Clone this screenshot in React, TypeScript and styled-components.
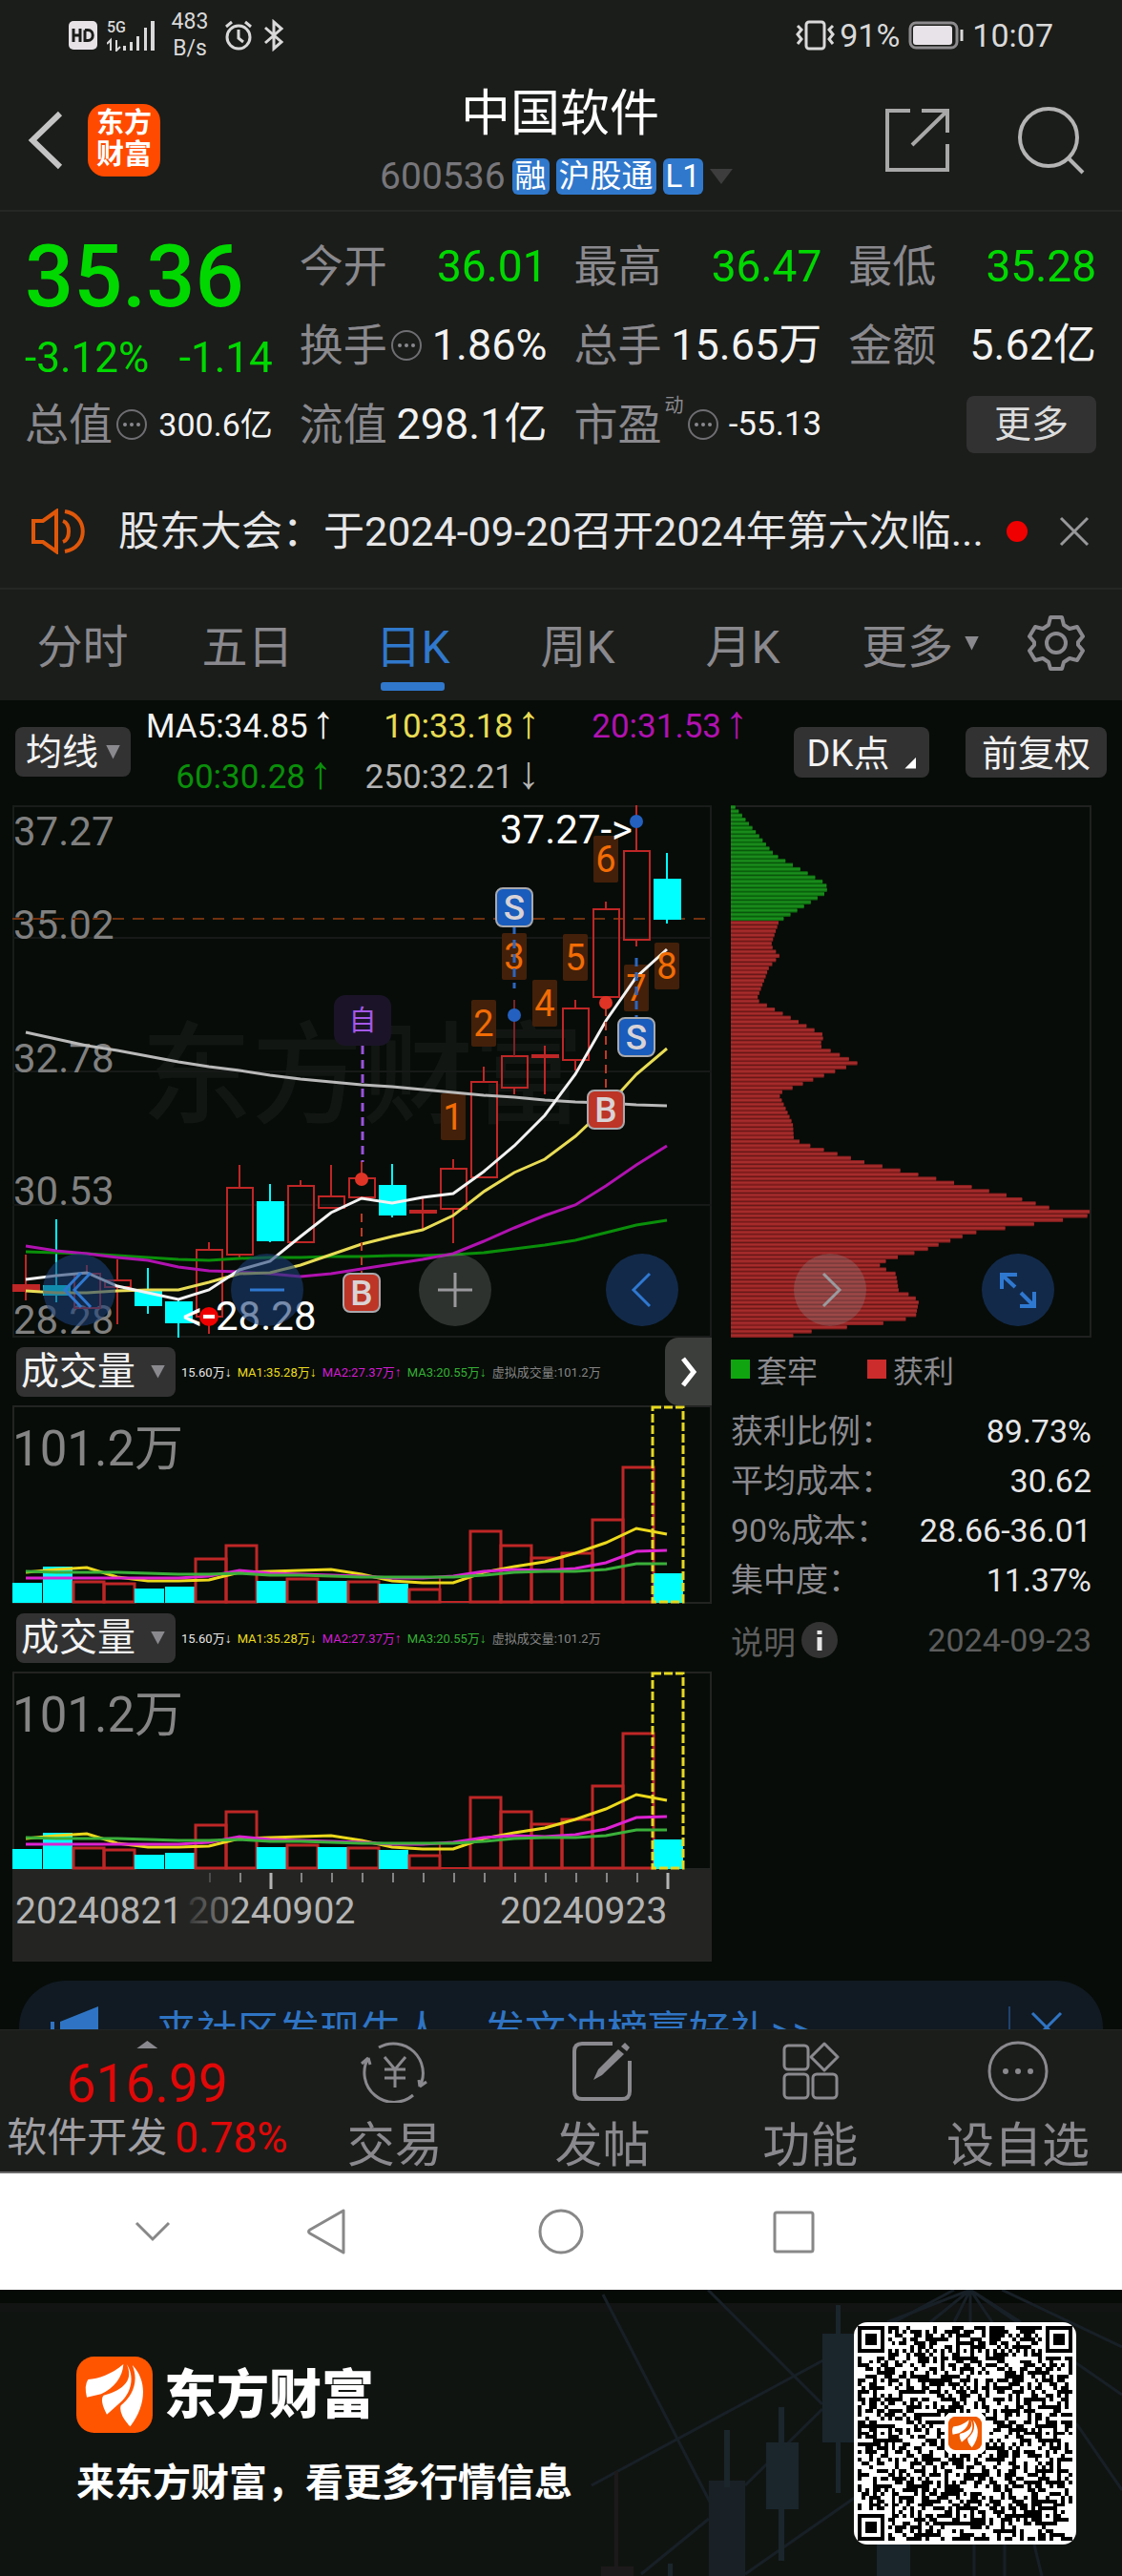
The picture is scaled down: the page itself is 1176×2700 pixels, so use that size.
import React from "react";
import styled, { createGlobalStyle } from "styled-components";

const FONT = `Roboto, "Noto Sans CJK SC", sans-serif`;
const C = {
  panel: "#1b1d1a",
  ink: "#070c08",
  label: "#8a898e",
  text: "#e6e6e8",
  green: "#00d800",
  blue: "#3078cc",
  box: "#323232",
  frame: "#222422",
  red: "#bf2626",
  cyan: "#00ffff",
};

const GlobalStyle = createGlobalStyle`
  * { box-sizing: border-box; }
  body { margin: 0; background: ${C.ink}; font-family: ${FONT}; color: ${C.text}; }
  button, select { font: inherit; color: inherit; background: none; border: 0; padding: 0; margin: 0; appearance: none; cursor: pointer; }
  svg { display: block; flex: none; }
  a { color: inherit; text-decoration: none; }
`;

const Row = styled.div<{ gap?: number }>`
  display: flex;
  align-items: center;
  gap: ${(p) => p.gap ?? 0}px;
`;
const Panel = styled.div`
  background: ${C.panel};
`;
const StatusBar = styled.div`
  display: flex;
  justify-content: space-between;
  height: 74px;
  padding: 0 72px;
  font-size: 34px;
  color: #d9d9d9;
`;
const NetSpeed = styled.div`
  width: 40px;
  font-size: 23px;
  line-height: 28px;
  text-align: center;
  margin: 0 6px;
`;
const Header = styled.header`
  display: grid;
  grid-template-columns: 1fr auto 1fr;
  align-items: center;
  height: 148px;
  padding: 0 38px 0 28px;
  border-bottom: 2px solid #252724;
`;
const HeaderEnd = styled(Row)`
  justify-content: flex-end;
`;
const AppBadge = styled.a`
  width: 76px;
  height: 76px;
  border-radius: 18px;
  background: #ff4a00;
  color: #fff;
  font-size: 29px;
  font-weight: 700;
  line-height: 33px;
  padding: 4px 9px;
`;
const Title = styled.h1`
  margin: 0;
  padding-left: 8px;
  font-size: 52px;
  line-height: 60px;
  font-weight: 400;
  text-align: center;
  color: #fff;
`;
const CodeLine = styled.div`
  display: flex;
  align-items: center;
  gap: 7px;
  margin-top: 16px;
  font-size: 39px;
  line-height: 38px;
  color: #77767b;
`;
const Tag = styled.span`
  padding: 0 3px;
  border-radius: 6px;
  background: ${C.blue};
  color: #fff;
  font-size: 33px;
  line-height: 38px;
`;
const Caret = styled.i<{ w: number; h: number; color?: string; up?: boolean }>`
  flex: none;
  width: ${(p) => p.w}px;
  height: ${(p) => p.h}px;
  background: ${(p) => p.color ?? C.label};
  clip-path: ${(p) => (p.up ? "polygon(50% 0, 100% 100%, 0 100%)" : "polygon(0 0, 100% 0, 50% 100%)")};
`;

const Quote = styled.section`
  display: grid;
  grid-template-columns: repeat(4, 1fr);
  grid-auto-rows: 83px;
  column-gap: 28px;
  padding: 15px 27px 8px 26px;
`;
const PriceBlock = styled.div`
  grid-row: span 2;
  color: ${C.green};
`;
const Price = styled.div`
  font-size: 90px;
  line-height: 108px;
  font-weight: 500;
`;
const Change = styled.div`
  display: flex;
  justify-content: space-between;
  font-size: 44px;
  line-height: 60px;
  white-space: nowrap;
`;
const Cell = styled.div`
  display: flex;
  align-items: center;
  justify-content: space-between;
  white-space: nowrap;
  line-height: 60px;
`;
const CellLabel = styled.span`
  display: flex;
  align-items: center;
  gap: 3px;
  font-size: 46px;
  color: ${C.label};
`;
const Sup = styled.span`
  align-self: flex-start;
  font-size: 20px;
  line-height: 20px;
`;
const Value = styled.span<{ size: number; green?: boolean }>`
  font-size: ${(p) => p.size}px;
  color: ${(p) => (p.green ? C.green : "#f2f2f2")};
`;
const MoreButton = styled.button`
  width: 136px;
  height: 60px;
  margin-left: auto;
  padding-bottom: 4px;
  border-radius: 8px;
  background: ${C.box};
  color: #dcdcdc;
  font-size: 39px;
`;

const News = styled.section`
  display: flex;
  align-items: center;
  height: 124px;
  padding: 3px 34px 0 32px;
  border-bottom: 2px solid #252724;
`;
const NewsText = styled.a`
  flex: 1;
  margin-left: 34px;
  font-size: 43px;
  line-height: 60px;
  white-space: nowrap;
  overflow: hidden;
`;
const RedDot = styled.i`
  width: 22px;
  height: 22px;
  margin: 0 33px 0 19px;
  border-radius: 50%;
  background: #f00000;
`;
const Tabs = styled.nav`
  display: grid;
  grid-template-columns: repeat(6, 173fr) 138fr;
  height: 116px;
`;
const Tab = styled.button<{ active?: boolean; menu?: boolean }>`
  display: flex;
  align-items: center;
  justify-content: center;
  gap: 12px;
  position: relative;
  padding: 0 0 4px ${(p) => (p.menu ? 26 : 0)}px;
  font-size: 48px;
  color: ${(p) => (p.active ? C.blue : C.label)};
  &::after {
    content: "";
    display: ${(p) => (p.active ? "block" : "none")};
    position: absolute;
    bottom: 10px;
    width: 67px;
    height: 9px;
    border-radius: 3px;
    background: ${C.blue};
  }
`;

const Averages = styled.section`
  display: flex;
  align-items: center;
  gap: 16px;
  height: 110px;
  padding: 0 16px 2px;
`;
const Picker = styled.label<{ wide?: boolean }>`
  display: flex;
  align-items: center;
  gap: ${(p) => (p.wide ? 16 : 7)}px;
  height: 52px;
  padding: 0 11px 0 ${(p) => (p.wide ? 5 : 11)}px;
  border-radius: 8px;
  background: ${C.box};
  color: #f2f2f2;
  font-size: ${(p) => (p.wide ? 40 : 38)}px;
`;
const AverageGrid = styled.div`
  display: grid;
  grid-template-columns: 195px 218px 218px;
  font-size: 35px;
  line-height: 53px;
  white-space: nowrap;
  text-align: right;
`;
const Tint = styled.span<{ color: string }>`
  color: ${(p) => p.color};
`;
const ArrowMark = styled.span`
  margin-left: 4px;
  font-family: "Liberation Sans", sans-serif;
  font-size: 48px;
  line-height: 36px;
`;
const ChartButton = styled.button<{ end?: boolean }>`
  display: flex;
  align-items: center;
  justify-content: center;
  gap: 16px;
  width: ${(p) => (p.end ? 148 : 142)}px;
  height: 53px;
  margin-left: ${(p) => (p.end ? 22 : 0)}px;
  padding-bottom: 4px;
  border-radius: 8px;
  background: ${C.box};
  color: #f2f2f2;
  font-size: 38px;
  white-space: nowrap;
`;
const Spacer = styled.div`
  flex: 1;
`;
const Corner = styled.i`
  align-self: flex-end;
  width: 12px;
  height: 12px;
  margin-bottom: 5px;
  background: #fff;
  clip-path: polygon(100% 0, 100% 100%, 0 100%);
`;

const ChartArea = styled.section`
  position: relative;
  display: grid;
  grid-template-columns: 733fr 378fr;
  gap: 20px;
  padding: 0 32px 20px 13px;
`;
const Plot = styled.svg`
  width: 100%;
  height: auto;
  font-family: ${FONT};
`;
const RoundButtons = styled.div`
  position: absolute;
  top: 470px;
  left: 45px;
  right: 71px;
  display: flex;
  justify-content: space-between;
`;
const RoundButton = styled.button<{ tone: "blue" | "grey" }>`
  display: grid;
  place-items: center;
  width: 76px;
  height: 76px;
  border-radius: 50%;
  background: ${(p) => (p.tone === "blue" ? "rgba(26, 62, 116, 0.6)" : "rgba(140, 140, 140, 0.3)")};
  color: ${(p) => (p.tone === "blue" ? "#2f78d0" : "#9a9a9e")};
`;
const VolumeBar = styled.div`
  display: flex;
  align-items: center;
  gap: 6px;
  height: 71px;
  padding-left: 4px;
  font-size: 13px;
  white-space: nowrap;
  ${ArrowMark} {
    margin-left: 0;
    font-size: 14px;
    line-height: 14px;
  }
`;
const NextButton = styled.button`
  display: grid;
  place-items: center;
  align-self: stretch;
  width: 49px;
  margin-left: auto;
  border-radius: 14px 0 0 14px;
  background: #3c3e3c;
  color: #fff;
`;
const Legend = styled.div`
  display: flex;
  align-items: center;
  gap: 52px;
  height: 72px;
  padding-bottom: 6px;
  font-size: 32px;
  color: ${C.label};
`;
const LegendItem = styled.span<{ color: string }>`
  display: flex;
  align-items: center;
  gap: 7px;
  &::before {
    content: "";
    width: 20px;
    height: 20px;
    background: ${(p) => p.color};
  }
`;
const Facts = styled.dl`
  margin: 0;
  font-size: 34px;
  line-height: 52px;
`;
const Fact = styled.div`
  display: flex;
  justify-content: space-between;
  dt { color: ${C.label}; }
  dd { margin: 0; }
`;
const Note = styled.div`
  display: flex;
  align-items: center;
  justify-content: space-between;
  height: 74px;
  font-size: 34px;
  color: #5d5d5d;
`;
const InfoButton = styled.button`
  display: flex;
  align-items: center;
  gap: 6px;
`;

const BannerClip = styled.aside`
  height: 51px;
  padding: 0 20px;
  overflow: hidden;
`;
const Banner = styled.div`
  display: flex;
  align-items: center;
  height: 98px;
  padding: 0 42px 0 33px;
  border-radius: 49px;
  background: #111a22;
  color: #2f74c4;
  font-size: 43px;
`;
const BannerText = styled.a`
  flex: 1;
  margin-left: 59px;
  white-space: nowrap;
`;
const Divider = styled.i`
  width: 2px;
  height: 44px;
  margin-right: 21px;
  background: #1d4270;
`;

const BottomBar = styled.nav`
  display: grid;
  grid-template-columns: 305fr repeat(4, 218fr);
  height: 151px;
  background: ${C.panel};
  border-top: 1px solid #232522;
  border-bottom: 2px solid #6a6a6a;
  color: ${C.label};
`;
const Sector = styled.button`
  display: flex;
  flex-direction: column;
  align-items: center;
  padding: 11px 0 0 4px;
`;
const SectorValue = styled.span`
  font-size: 55px;
  line-height: 74px;
  color: #e00808;
`;
const SectorName = styled.span`
  display: flex;
  gap: 8px;
  font-size: 42px;
  line-height: 40px;
  white-space: nowrap;
  color: #a09fa4;
`;
const SectorChange = styled.span`
  font-size: 44px;
  color: #e00808;
`;
const Action = styled.button`
  display: flex;
  flex-direction: column;
  align-items: center;
  padding-top: 10px;
  gap: 15px;
  font-size: 50px;
  line-height: 60px;
  white-space: nowrap;
`;
const SystemNav = styled.nav`
  display: flex;
  align-items: center;
  height: 122px;
  padding-left: 141px;
  background: #fff;
  color: #888;
`;
const SystemButton = styled.button<{ before: number }>`
  margin-left: ${(p) => p.before}px;
`;

const Footer = styled.footer`
  position: relative;
  display: flex;
  align-items: center;
  justify-content: space-between;
  height: 300px;
  padding: 0 48px 0 80px;
  background: #101411;
  color: #fff;
`;
const FooterArt = styled.svg`
  position: absolute;
  inset: 0;
  width: 100%;
  height: 100%;
`;
const Brand = styled.div`
  position: relative;
  padding-top: 2px;
`;
const BrandName = styled.span`
  font-size: 55px;
  line-height: 80px;
  font-weight: 900;
`;
const Slogan = styled.p`
  margin: 23px 0 0;
  font-size: 40px;
  line-height: 60px;
  font-weight: 700;
`;
const QrCard = styled.div`
  position: relative;
  padding: 4px;
  border-radius: 14px;
  background: #fff;
`;

/* ---------- icons ---------- */

type IconProps = { w: number; h: number; sw?: number; children: React.ReactNode };
const Icon = ({ w, h, sw = 3, children }: IconProps) => (
  <svg width={w} height={h} viewBox={`0 0 ${w} ${h}`} fill="none" stroke="currentColor" strokeWidth={sw} aria-hidden="true">
    {children}
  </svg>
);

const Dots = () => (
  <Icon w={34} h={34} sw={2}>
    <circle cx="17" cy="17" r="15" stroke="#6f6e72" />
    <g fill="#8a898e" stroke="none">
      <circle cx="10" cy="17" r="2" />
      <circle cx="17" cy="17" r="2" />
      <circle cx="24" cy="17" r="2" />
    </g>
  </Icon>
);

const Flame = ({ size, color = "#ff5500" }: { size: number; color?: string }) => (
  <svg width={size} height={size} viewBox="60 60 240 240" aria-hidden="true">
    <rect x="60" y="60" width="240" height="240" rx="56" fill={color} />
    <g fill="#fff">
      <path d="M208 84C170 116 130 130 97 132Q84 150 93 188L138 178C178 160 206 124 208 84Z" />
      <path d="M218 84C240 130 214 164 146 182Q132 196 156 242L192 210C236 176 244 120 218 84Z" />
      <path d="M236 86C258 140 236 184 200 214Q192 240 229 280C276 220 288 140 236 86Z" />
    </g>
  </svg>
);

/* ---------- price chart ---------- */

const cx = (i: number) => 27 + 32 * i;
const line = (ys: number[]) => ys.map((y, i) => `${cx(i)},${y}`).join(" ");

// kind, body top, body bottom, high, low
type Candle = [string, number, number, number, number];
const candles: Candle[] = [
  ["f", 1347, 1353, 1315, 1363],
  ["c", 1348, 1357, 1278, 1365],
  ["r", 1335, 1371, 1326, 1371],
  ["r", 1342, 1349, 1320, 1388],
  ["c", 1353, 1368, 1329, 1377],
  ["c", 1365, 1386, 1363, 1403],
  ["r", 1310, 1380, 1302, 1398],
  ["r", 1245, 1315, 1221, 1318],
  ["c", 1260, 1300, 1241, 1302],
  ["r", 1243, 1302, 1237, 1302],
  ["r", 1254, 1266, 1221, 1266],
  ["r", 1235, 1255, 1217, 1255],
  ["c", 1243, 1273, 1220, 1276],
  ["r", 1269, 1271, 1255, 1288],
  ["r", 1225, 1267, 1215, 1303],
  ["r", 1134, 1234, 1118, 1234],
  ["r", 1107, 1140, 1096, 1147],
  ["r", 1106, 1108, 1096, 1147],
  ["r", 1057, 1111, 1048, 1122],
  ["r", 953, 1045, 945, 1056],
  ["r", 892, 985, 844, 992],
  ["c", 922, 963, 894, 968],
];
const ma5 = [1341, 1337, 1334, 1348, 1355, 1362, 1352, 1331, 1322, 1296, 1271, 1256, 1261, 1255, 1251, 1228, 1201, 1169, 1126, 1070, 1024, 995];
const ma10 = [1353, 1355, 1355, 1353, 1352, 1352, 1344, 1335, 1334, 1326, 1315, 1304, 1296, 1289, 1274, 1249, 1229, 1215, 1191, 1161, 1126, 1099];
const ma20 = [1306, 1311, 1314, 1318, 1321, 1328, 1332, 1333, 1335, 1338, 1335, 1330, 1325, 1320, 1314, 1301, 1287, 1274, 1263, 1243, 1221, 1201];
const ma60 = [1312, 1313, 1314, 1316, 1318, 1320, 1321, 1319, 1318, 1318, 1317, 1317, 1316, 1316, 1315, 1313, 1309, 1305, 1300, 1292, 1284, 1279];
const ma250 = [1082, 1089, 1096, 1101, 1107, 1113, 1118, 1122, 1127, 1131, 1134, 1137, 1139, 1142, 1145, 1148, 1150, 1153, 1155, 1156, 1158, 1159];
const countTags: [string, number, number][] = [
  ["1", 14, 1146], ["2", 15, 1048], ["3", 16, 978], ["4", 17, 1027],
  ["5", 18, 979], ["6", 19, 876], ["7", 20, 1011], ["8", 21, 988],
];

const Signal = ({ x, y, kind }: { x: number; y: number; kind: "B" | "S" }) => (
  <g>
    <rect x={x - 19} y={y - 20} width="38" height="40" rx="7" fill={kind === "S" ? "#195cbc" : "#bd3526"} stroke="#a9a9ad" strokeWidth="2" />
    <text x={x} y={y + 13} fontSize="37" fontWeight="500" fill="#d9d3d6" textAnchor="middle">{kind}</text>
  </g>
);

const PriceChart = () => (
  <Plot viewBox="13 844 733 558" role="img" aria-label="日K线图">
    <rect x="14" y="845" width="731" height="556" fill="none" stroke="#191c1a" strokeWidth="2" />
    <text x="148" y="1168" fontSize="116" fontWeight="500" fill="#121613">东方财富</text>
    <g stroke="#161917" strokeWidth="2">
      <path d="M13 983H746M13 1123H746M13 1263H746" />
    </g>
    <g fontSize="42" fill="#808080">
      <text x="14" y="886">37.27</text>
      <text x="14" y="984">35.02</text>
      <text x="14" y="1124">32.78</text>
      <text x="14" y="1263">30.53</text>
      <text x="14" y="1398">28.28</text>
    </g>
    <path d="M13 963H746" stroke="#71310f" strokeWidth="2" strokeDasharray="12 9" />
    {countTags.map(([n, i, y]) => (
      <rect key={n} x={cx(i) - 13} y={y} width="26" height="49" rx="2" fill="#43200a" />
    ))}
    {candles.map(([kind, top, bottom, high, low], i) => {
      const color = kind === "c" ? C.cyan : C.red;
      const solid = kind !== "r";
      return (
        <g key={i} stroke={color} strokeWidth="2" fill={solid ? color : "none"}>
          <path d={`M${cx(i)} ${high}V${top}M${cx(i)} ${bottom}V${low}`} />
          <rect x={cx(i) - 13} y={top} width="27" height={bottom - top} />
        </g>
      );
    })}
    <path d="M539 1048V1107" stroke="#7a2226" strokeWidth="2" />
    <g fill="none" strokeWidth="3">
      <polyline points={line(ma250)} stroke="#b9b9b9" />
      <polyline points={line(ma60)} stroke="#0a8f0a" />
      <polyline points={line(ma20)} stroke="#b012b0" />
      <polyline points={line(ma10)} stroke="#e8dc55" />
      <polyline points={line(ma5)} stroke="#f2f2f2" />
    </g>
    <g fontSize="38" fill="#f26c05" textAnchor="middle">
      {countTags.map(([n, i, y]) => (
        <text key={n} x={cx(i)} y={y + 38}>{n}</text>
      ))}
    </g>
    <g strokeWidth="3" strokeDasharray="9 6">
      <path d="M380 1096V1218" stroke="#9a52dc" />
      <path d="M539 970V1036M667 1004V1066" stroke="#2c66c0" />
      <path d="M635 1056V1144M379 1272V1336" stroke="#c03a24" strokeWidth="2" />
    </g>
    <rect x="350" y="1043" width="60" height="53" rx="12" fill="#1b1428" />
    <text x="380" y="1080" fontSize="29" fill="#a458e8" textAnchor="middle">自</text>
    <circle cx="539" cy="1064" r="7" fill="#2460c0" />
    <circle cx="667" cy="861" r="7" fill="#2460c0" />
    <circle cx="635" cy="1051" r="7" fill="#e03426" />
    <circle cx="379" cy="1236" r="7" fill="#e03426" />
    <Signal x={539} y={951} kind="S" />
    <Signal x={667} y={1087} kind="S" />
    <Signal x={635} y={1163} kind="B" />
    <Signal x={379} y={1355} kind="B" />
    <g fontSize="42" fill="#fff">
      <text x="524" y="884">37.27-&gt;</text>
      <text x="191" y="1394">&lt;</text>
      <text x="226" y="1394">28.28</text>
    </g>
    <circle cx="219" cy="1380" r="10" fill="#f00000" />
    <path d="M213 1380H225" stroke="#fff" strokeWidth="4" />
  </Plot>
);

/* ---------- chip distribution ---------- */

const profile: [number, number][] = [
  [844, 3], [896, 46], [926, 100], [935, 101], [963, 55], [964, 51], [991, 42], [1002, 51], [1014, 40], [1048, 27],
  [1085, 98], [1096, 93], [1114, 133], [1130, 90], [1146, 50], [1178, 65], [1194, 66], [1200, 81], [1218, 140],
  [1241, 240], [1255, 299], [1266, 335], [1270, 377], [1275, 373], [1284, 310], [1292, 254], [1304, 219], [1311, 201],
  [1320, 165], [1327, 155], [1335, 173], [1353, 176], [1358, 191], [1364, 197], [1379, 194], [1385, 175], [1389, 139],
  [1396, 79], [1403, 53],
];
const widthAt = (y: number) => {
  const k = profile.findIndex((p) => p[0] >= y);
  if (k <= 0) return profile[k === 0 ? 0 : profile.length - 1][1];
  const [y0, w0] = profile[k - 1];
  const [y1, w1] = profile[k];
  return w0 + ((w1 - w0) * (y - y0)) / (y1 - y0);
};
const PITCH = 558 / 129;

const ChipChart = () => (
  <Plot viewBox="766 844 378 558" role="img" aria-label="筹码分布">
    <rect x="767" y="845" width="376" height="556" fill="none" stroke="#1f211f" strokeWidth="2" />
    {Array.from({ length: 129 }, (_, i) => {
      const y = 844 + i * PITCH;
      const w = widthAt(y + 2);
      const under = y < 962;
      return (
        <g key={i}>
          <rect x="766" y={y} width={w} height={PITCH} fill={under ? "#0e7010" : "#861f1f"} />
          <rect x="766" y={y + 1} width={w} height="2" fill={under ? "#1a8c1c" : "#a72c2c"} />
        </g>
      );
    })}
  </Plot>
);

/* ---------- volume ---------- */

const volumes: [string, number][] = [
  ["c", 186], ["c", 169], ["r", 185], ["r", 187], ["c", 192], ["c", 190], ["r", 161], ["r", 147], ["c", 184], ["r", 182], ["c", 184],
  ["r", 185], ["c", 187], ["r", 193], ["n", 181], ["r", 132], ["r", 147], ["r", 160], ["r", 155], ["r", 120], ["r", 65], ["c", 176],
];
const vol5 = [175, 172, 170, 180, 184, 184, 183, 175, 174, 173, 172, 177, 184, 186, 186, 175, 169, 164, 155, 144, 129, 135];
const vol10 = [181, 181, 181, 181, 181, 181, 179, 173, 176, 177, 178, 179, 181, 181, 179, 174, 172, 173, 171, 165, 153, 152];
const vol20 = [174, 175, 175, 175, 176, 177, 177, 176, 178, 178, 179, 180, 180, 180, 180, 178, 175, 174, 174, 172, 166, 166];

const VolumeChart = () => (
  <Plot viewBox="13 0 733 208" role="img" aria-label="成交量图">
    <rect x="14" y="1" width="731" height="206" fill="none" stroke={C.frame} strokeWidth="2" />
    <text x="13" y="63" fontSize="51" fill="#858585">101.2万</text>
    {volumes.map(([kind, y], i) => {
      const x = 13 + 32 * i;
      if (kind === "c") return <rect key={i} x={x} y={y} width="31" height={207 - y} fill={C.cyan} />;
      if (kind === "n") return <path key={i} d={`M${x} ${y}V206H${x + 32}`} stroke={C.red} strokeWidth="2" fill="none" />;
      return <rect key={i} x={x} y={y} width="32" height={206 - y} stroke={C.red} strokeWidth="3" fill="none" />;
    })}
    <rect x="684" y="2" width="32" height="204" fill="none" stroke="#e6d820" strokeWidth="3" strokeDasharray="9 3" />
    <g fill="none" strokeWidth="3">
      <polyline points={line(vol5)} stroke="#ecd91c" />
      <polyline points={line(vol10)} stroke="#dc22d2" />
      <polyline points={line(vol20)} stroke="#3ab03a" />
    </g>
  </Plot>
);

const DateAxis = () => (
  <Plot viewBox="13 0 733 96" role="img" aria-label="日期轴">
    <defs>
      <linearGradient id="fade" gradientUnits="userSpaceOnUse" x1="199" x2="250" y1="0" y2="0">
        <stop offset="0" stopColor="#3a3b3a" />
        <stop offset="0.6" stopColor="#707070" />
        <stop offset="1" stopColor="#b4b4b4" />
      </linearGradient>
    </defs>
    <rect x="13" width="733" height="96" fill="#242523" />
    {Array.from({ length: 16 }, (_, k) => {
      const i = k + 6;
      const major = i === 8 || i === 21;
      return <path key={i} d={`M${cx(i) + 1} 3V${major ? 20 : 13}`} stroke={k === 0 ? "#4a4b4a" : major ? "#b4b4b4" : "#858585"} strokeWidth={major ? 3 : 2} />;
    })}
    <g fontSize="39" fill="#b4b4b4">
      <text x="16" y="56">20240821</text>
      <text x="197" y="56" fill="url(#fade)">20240902</text>
      <text x="524" y="56">20240923</text>
    </g>
  </Plot>
);

const VolumePanel = ({ id, next }: { id: string; next?: boolean }) => (
  <div>
    <VolumeBar>
      <Picker wide htmlFor={id}>
        <select id={id} aria-label="副图指标" defaultValue="成交量">
          <option>成交量</option>
        </select>
        <Caret w={15} h={14} />
      </Picker>
      <Tint color="#e6e6e6">15.60万<ArrowMark>↓</ArrowMark></Tint>
      <Tint color="#ecdc1c">MA1:35.28万<ArrowMark>↓</ArrowMark></Tint>
      <Tint color="#d31bd3">MA2:27.37万<ArrowMark>↑</ArrowMark></Tint>
      <Tint color="#35b035">MA3:20.55万<ArrowMark>↓</ArrowMark></Tint>
      <Tint color="#858585">虚拟成交量:101.2万</Tint>
      {next && (
        <NextButton aria-label="下一个">
          <Icon w={20} h={32} sw={5}><path d="M4 2L15 16L4 30" /></Icon>
        </NextButton>
      )}
    </VolumeBar>
    <VolumeChart />
  </div>
);

/* ---------- QR code ---------- */

const N = 57;
const qrPath = (() => {
  let seed = 20240923;
  const rand = () => {
    seed = (seed * 1103515245 + 12345) % 2147483648;
    return seed / 2147483648;
  };
  const ring = (dx: number, dy: number) => Math.max(Math.abs(dx), Math.abs(dy));
  const finders = [[3, 3], [53, 3], [3, 53]];
  const aligns = [[28, 6], [6, 28], [50, 28], [28, 50], [50, 50]];
  let d = "";
  for (let y = 0; y < N; y++) {
    for (let x = 0; x < N; x++) {
      let on = rand() > 0.49;
      if (x === 6 || y === 6) on = (x + y) % 2 === 0;
      for (const [ax, ay] of aligns) {
        const r = ring(x - ax, y - ay);
        if (r <= 2) on = r !== 1;
      }
      for (const [fx, fy] of finders) {
        const r = ring(x - fx, y - fy);
        if (r <= 4) on = r !== 4 && r !== 2;
      }
      if (on) d += `M${x} ${y}h1v1h-1z`;
    }
  }
  return d;
})();

const QrCode = () => (
  <QrCard>
    <svg width="225" height="225" viewBox="0 0 57 57" shapeRendering="crispEdges" role="img" aria-label="二维码">
      <path d={qrPath} fill="#000" />
      <rect x="23" y="23" width="11" height="11" rx="2" fill="#fff" />
      <svg x="24" y="24" width="9" height="9" shapeRendering="auto">
        <g transform="scale(0.25)"><Flame size={36} color="#f05a00" /></g>
      </svg>
    </svg>
  </QrCard>
);

/* ---------- page ---------- */

export default function App() {
  return (
    <>
      <GlobalStyle />
      <Panel>
        <StatusBar>
          <Row gap={10}>
            <Icon w={30} h={30} sw={3}>
              <rect width="30" height="30" rx="5" fill="#e6e2e6" stroke="none" />
              <path d="M5 8V22M12 8V22M5 15H12M17 9.500V20.500H20C27 20.500 27 9.500 20 9.500H17" stroke="#1b1d1a" />
            </Icon>
            <svg width="51" height="34" viewBox="0 0 51 34" fill="#d9d9d9">
              <text x="0" y="14" fontSize="16" fontWeight="500">5G</text>
              <path d="M17 28h3v5h-3zM24 24h3v9h-3zM31 18h3v15h-3zM39 9h3v24h-3zM46 2h4v31h-4z" />
              <path d="M4 33V22L0 26M10 22V33L14 29" fill="none" stroke="#d9d9d9" strokeWidth="2" />
            </svg>
            <NetSpeed>483 B/s</NetSpeed>
            <Icon w={31} h={32} sw={3}>
              <circle cx="15" cy="18" r="12" />
              <path d="M15 10V19L20 23M2 7L8 2M28 7L22 2" />
            </Icon>
            <Icon w={22} h={34} sw={3}>
              <path d="M2 9L19 24L11 31V3L19 10L2 25" />
            </Icon>
          </Row>
          <Row gap={9}>
            <Row gap={5}>
              <Icon w={41} h={34} sw={3}>
                <rect x="11" y="3" width="19" height="28" rx="3" />
                <path d="M2 7L6 11L2 16L6 21L2 26M39 7L35 11L39 16L35 21L39 26" />
              </Icon>
              <span>91%</span>
            </Row>
            <Icon w={58} h={30} sw={3}>
              <rect x="2" y="2" width="49" height="26" rx="6" stroke="#8d8b8d" />
              <rect x="5" y="5" width="41" height="20" rx="3" fill="#e8e3e8" stroke="none" />
              <path d="M56 9V21" />
            </Icon>
            <span>10:07</span>
          </Row>
        </StatusBar>
        <Header>
          <Row gap={26}>
            <button aria-label="返回">
              <Icon w={38} h={62} sw={6}><path d="M35 3L6 31L35 59" stroke="#c4c4c4" /></Icon>
            </button>
            <AppBadge href="#">东方财富</AppBadge>
          </Row>
          <div>
            <Title>中国软件</Title>
            <CodeLine>
              <span>600536</span>
              <Tag>融</Tag>
              <Tag>沪股通</Tag>
              <Tag>L1</Tag>
              <Caret w={24} h={16} color="#3c3d3c" />
            </CodeLine>
          </div>
          <HeaderEnd gap={68}>
            <button aria-label="分享">
              <Icon w={70} h={68} sw={4}>
                <path d="M26 3H2V65H65V38M38 3H65V26M65 3L28 39" stroke="#a8a8a8" />
              </Icon>
            </button>
            <button aria-label="搜索">
              <Icon w={72} h={72} sw={4}>
                <circle cx="33" cy="33" r="30" stroke="#b4b4b4" />
                <path d="M54 55L69 70" stroke="#b4b4b4" />
              </Icon>
            </button>
          </HeaderEnd>
        </Header>

        <Quote>
          <PriceBlock>
            <Price>35.36</Price>
            <Change><span>-3.12%</span><span>-1.14</span></Change>
          </PriceBlock>
          <Cell><CellLabel>今开</CellLabel><Value size={46} green>36.01</Value></Cell>
          <Cell><CellLabel>最高</CellLabel><Value size={46} green>36.47</Value></Cell>
          <Cell><CellLabel>最低</CellLabel><Value size={46} green>35.28</Value></Cell>
          <Cell><CellLabel>换手<Dots /></CellLabel><Value size={45}>1.86%</Value></Cell>
          <Cell><CellLabel>总手</CellLabel><Value size={45}>15.65万</Value></Cell>
          <Cell><CellLabel>金额</CellLabel><Value size={45}>5.62亿</Value></Cell>
          <Cell><CellLabel>总值<Dots /></CellLabel><Value size={34}>300.6亿</Value></Cell>
          <Cell><CellLabel>流值</CellLabel><Value size={45}>298.1亿</Value></Cell>
          <Cell><CellLabel>市盈<Sup>动</Sup><Dots /></CellLabel><Value size={35}>-55.13</Value></Cell>
          <Cell><MoreButton>更多</MoreButton></Cell>
        </Quote>

        <News>
          <Icon w={58} h={48} sw={4}>
            <g stroke="#e0570a">
              <path d="M27 3L13 13H3V35H13L27 45Z" />
              <path d="M34 13C42 16 42 32 34 35M36 3C61 7 61 41 36 45" />
            </g>
          </Icon>
          <NewsText href="#">股东大会：于2024-09-20召开2024年第六次临...</NewsText>
          <RedDot />
          <button aria-label="关闭">
            <Icon w={32} h={32} sw={3}><path d="M2 2L30 30M30 2L2 30" stroke="#98989a" /></Icon>
          </button>
        </News>

        <Tabs>
          <Tab>分时</Tab>
          <Tab>五日</Tab>
          <Tab active>日K</Tab>
          <Tab>周K</Tab>
          <Tab>月K</Tab>
          <Tab menu>更多<Caret w={15} h={15} /></Tab>
          <Tab aria-label="设置">
            <Icon w={60} h={60} sw={4}>
              <path d="M24 3H36L38 11L44 15L52 13L58 23L53 29V32L58 38L52 48L44 46L38 50L36 57H24L22 50L16 46L8 48L2 38L7 32V29L2 23L8 13L16 15L22 11Z" strokeLinejoin="round" />
              <circle cx="30" cy="30" r="10" />
            </Icon>
          </Tab>
        </Tabs>
      </Panel>

      <Averages>
        <Picker htmlFor="main-indicator">
          <select id="main-indicator" aria-label="主图指标" defaultValue="均线">
            <option>均线</option>
          </select>
          <Caret w={15} h={15} />
        </Picker>
        <AverageGrid>
          <Tint color="#f2f2f2">MA5:34.85<ArrowMark>↑</ArrowMark></Tint>
          <Tint color="#e8dc55">10:33.18<ArrowMark>↑</ArrowMark></Tint>
          <Tint color="#b012b0">20:31.53<ArrowMark>↑</ArrowMark></Tint>
          <Tint color="#0a8f0a">60:30.28<ArrowMark>↑</ArrowMark></Tint>
          <Tint color="#b4b4b4">250:32.21<ArrowMark>↓</ArrowMark></Tint>
        </AverageGrid>
        <Spacer />
        <ChartButton>DK点<Corner /></ChartButton>
        <ChartButton end>前复权</ChartButton>
      </Averages>

      <ChartArea>
        <div>
          <PriceChart />
          <VolumePanel id="volume-a" next />
          <VolumePanel id="volume-b" />
          <DateAxis />
        </div>
        <div>
          <ChipChart />
          <Legend>
            <LegendItem color="#10a510">套牢</LegendItem>
            <LegendItem color="#cc2c2c">获利</LegendItem>
          </Legend>
          <Facts>
            <Fact><dt>获利比例：</dt><dd>89.73%</dd></Fact>
            <Fact><dt>平均成本：</dt><dd>30.62</dd></Fact>
            <Fact><dt>90%成本：</dt><dd>28.66-36.01</dd></Fact>
            <Fact><dt>集中度：</dt><dd>11.37%</dd></Fact>
          </Facts>
          <Note>
            <InfoButton>
              说明
              <Icon w={38} h={38} sw={5}>
                <circle cx="19" cy="19" r="19" fill="#333" stroke="none" />
                <path d="M19 9V13M19 16V30" stroke="#e6e6e6" />
              </Icon>
            </InfoButton>
            <time dateTime="2024-09-23">2024-09-23</time>
          </Note>
        </div>
        <RoundButtons>
          <RoundButton tone="blue" aria-label="最早">
            <Icon w={40} h={40}><path d="M22 2L5 20L22 38M32 2L15 20L32 38" /></Icon>
          </RoundButton>
          <RoundButton tone="blue" aria-label="缩小">
            <Icon w={40} h={40}><path d="M2 20H38" /></Icon>
          </RoundButton>
          <RoundButton tone="grey" aria-label="放大">
            <Icon w={40} h={40}><path d="M2 20H38M20 2V38" /></Icon>
          </RoundButton>
          <RoundButton tone="blue" aria-label="向左">
            <Icon w={40} h={40}><path d="M28 3L11 20L28 37" /></Icon>
          </RoundButton>
          <RoundButton tone="grey" aria-label="向右">
            <Icon w={40} h={40}><path d="M13 3L30 20L13 37" /></Icon>
          </RoundButton>
          <RoundButton tone="blue" aria-label="全屏">
            <Icon w={40} h={40} sw={4}>
              <path d="M19 4H3V19M4 5L17 17M37 22V37H22M36 36L23 23" />
            </Icon>
          </RoundButton>
        </RoundButtons>
      </ChartArea>

      <BannerClip>
        <Banner>
          <Icon w={51} h={44} sw={4}>
            <path d="M2 16V30" />
            <path d="M10 16L50 0V44L10 30Z" fill="currentColor" stroke="none" />
          </Icon>
          <BannerText href="#">来社区发现牛人，发文冲榜赢好礼&gt;&gt;</BannerText>
          <Divider />
          <button aria-label="关闭横幅">
            <Icon w={34} h={34}><path d="M2 2L32 32M32 2L2 32" /></Icon>
          </button>
        </Banner>
      </BannerClip>

      <BottomBar>
        <Sector>
          <Caret w={22} h={8} up />
          <SectorValue>616.99</SectorValue>
          <SectorName>软件开发<SectorChange>0.78%</SectorChange></SectorName>
        </Sector>
        <Action>
          <Icon w={74} h={66}>
            <path d="M20 8A31 31 0 0 1 63 49L70 44M63 49L62 42" />
            <path d="M56 58A31 31 0 0 1 9 19L2 25M9 19L11 26" />
            <path d="M26 18L37 31L48 18M37 31V50M26 31H48M26 40H48" />
          </Icon>
          交易
        </Action>
        <Action>
          <Icon w={66} h={66} sw={4}>
            <path d="M44 4H12Q4 4 4 12V54Q4 62 12 62H54Q62 62 62 54V22" />
            <path d="M24 42L29 31L50 10L56 15L33 37Z" fill="currentColor" stroke="none" />
            <path d="M53 7L57 3L62 8L59 12Z" fill="currentColor" stroke="none" />
          </Icon>
          发帖
        </Action>
        <Action>
          <Icon w={62} h={66}>
            <rect x="4" y="6" width="25" height="25" rx="4" />
            <rect x="4" y="36" width="25" height="25" rx="4" />
            <rect x="34" y="36" width="25" height="25" rx="4" />
            <path d="M46 4L60 18L46 32L32 18Z" strokeLinejoin="round" />
          </Icon>
          功能
        </Action>
        <Action>
          <Icon w={66} h={66}>
            <circle cx="33" cy="33" r="30" />
            <g fill="currentColor" stroke="none">
              <circle cx="20" cy="33" r="3" />
              <circle cx="33" cy="33" r="3" />
              <circle cx="46" cy="33" r="3" />
            </g>
          </Icon>
          设自选
        </Action>
      </BottomBar>

      <SystemNav>
        <SystemButton before={0} aria-label="收起">
          <Icon w={38} h={22}><path d="M2 2L19 19L36 2" /></Icon>
        </SystemButton>
        <SystemButton before={142} aria-label="后退">
          <Icon w={43} h={50}><path d="M39 3V47L4 27Q1 25 4 23Z" strokeLinejoin="round" /></Icon>
        </SystemButton>
        <SystemButton before={200} aria-label="主页">
          <Icon w={48} h={50}><circle cx="24" cy="25" r="22" /></Icon>
        </SystemButton>
        <SystemButton before={198} aria-label="最近任务">
          <Icon w={44} h={46}><rect x="2" y="3" width="40" height="41" rx="2" /></Icon>
        </SystemButton>
      </SystemNav>

      <Footer>
        <FooterArt viewBox="0 0 1176 300" preserveAspectRatio="xMaxYMin slice" aria-hidden="true">
          <rect width="1176" height="14" fill="#070b07" />
          <rect y="14" width="1176" height="9" fill="#121313" />
          <g stroke="#182027" strokeWidth="3" fill="none">
            <path d="M1000 0L620 205M742 0L862 120M632 5L748 230M672 298L743 240M781 205L862 125M781 298L900 215" />
            <path d="M1017 0L930 34M1017 0L975 34M1017 0L1000 34M1017 0V34M1017 0L1040 34M1017 0L1070 34M1017 0L1176 110M1050 0L1176 60M1128 140L1176 210M1021 267V300M1053 267V300M1084 267L1092 300" />
          </g>
          <g fill="#1a262c">
            <rect x="862" y="46" width="34" height="114" />
            <rect x="876" y="16" width="5" height="197" />
            <rect x="803" y="160" width="34" height="70" />
            <rect x="816" y="123" width="6" height="161" />
            <rect x="743" y="200" width="38" height="100" fill="#192126" />
            <rect x="759" y="147" width="6" height="60" />
            <rect x="919" y="260" width="35" height="40" />
            <rect x="700" y="287" width="5" height="13" />
          </g>
          <g fill="#1d1a1b">
            <rect x="644" y="190" width="4" height="100" />
            <rect x="630" y="290" width="34" height="10" />
          </g>
        </FooterArt>
        <Brand>
          <Row gap={12}>
            <Flame size={80} />
            <BrandName>东方财富</BrandName>
          </Row>
          <Slogan>来东方财富，看更多行情信息</Slogan>
        </Brand>
        <QrCode />
      </Footer>
    </>
  );
}
